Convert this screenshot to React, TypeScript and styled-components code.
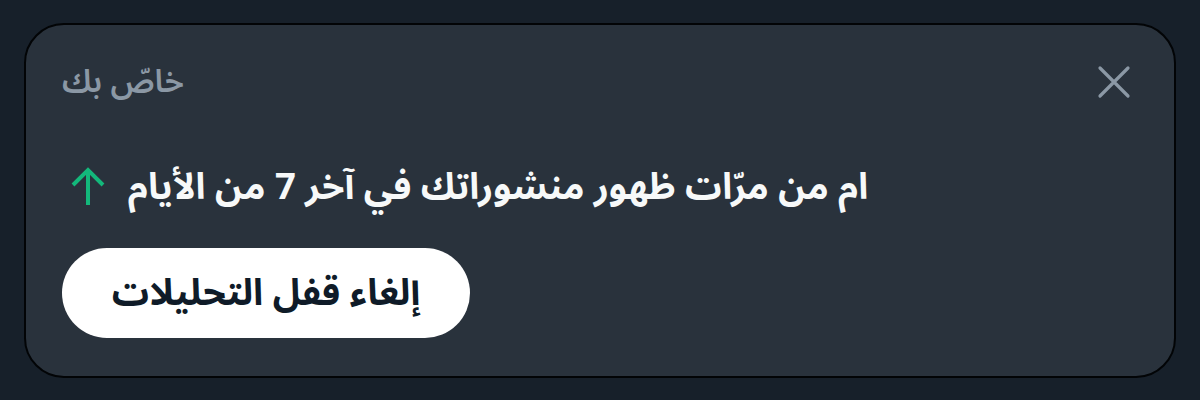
import styled, { createGlobalStyle } from "styled-components";

const GlobalStyle = createGlobalStyle`
  body {
    margin: 0;
    background-color: #17202a;
    font-family: "Noto Sans Arabic", "DejaVu Sans", "Noto Sans", sans-serif;
  }
`;

const Page = styled.div`
  width: 1200px;
  height: 400px;
  padding: 23px 24px 0 24px;
  box-sizing: border-box;
  overflow: hidden;
`;

const Card = styled.div`
  box-sizing: border-box;
  width: 1152px;
  height: 355px;
  background-color: #29323c;
  border: 2.5px solid #020406;
  border-radius: 40px;
  padding: 36px 36px 37px 36px;
  display: flex;
  flex-direction: column;
`;

const Header = styled.div`
  height: 42px;
  display: flex;
  align-items: center;
  justify-content: space-between;
`;

const Label = styled.span`
  color: #8b98a5;
  font-size: 32px;
  font-weight: 600;
  direction: rtl;
`;

const CloseButton = styled.button`
  background: none;
  border: none;
  padding: 0;
  margin-right: 6px;
  width: 36px;
  height: 36px;
  display: flex;
  align-items: center;
  justify-content: center;
  cursor: pointer;
`;

const Headline = styled.div`
  margin-top: 63px;
  height: 42px;
  display: flex;
  align-items: center;
  gap: 22px;
  padding-left: 8px;
`;

const HeadlineText = styled.span`
  color: #f7f9f9;
  font-size: 36.4px;
  font-weight: 700;
  direction: rtl;
`;

const Unlock = styled.button`
  margin-top: 40px;
  width: 408px;
  height: 90px;
  border: none;
  border-radius: 45px;
  background-color: #ffffff;
  color: #0f1b28;
  font-family: inherit;
  font-size: 37px;
  font-weight: 700;
  direction: rtl;
  display: flex;
  align-items: center;
  justify-content: center;
  cursor: pointer;
`;

export default function App() {
  return (
    <>
      <GlobalStyle />
      <Page>
        <Card>
          <Header>
            <Label>خاصّ بك</Label>
            <CloseButton aria-label="إغلاق">
              <svg width="34" height="34" viewBox="0 0 34 34">
                <path
                  d="M3 3 L31 31 M31 3 L3 31"
                  stroke="#8b98a5"
                  strokeWidth="3.2"
                  strokeLinecap="round"
                  fill="none"
                />
              </svg>
            </CloseButton>
          </Header>
          <Headline>
            <svg width="36" height="40" viewBox="0 0 36 40">
              <path
                d="M18 38 V3 M3 18 L18 3 L33 18"
                stroke="#13b87b"
                strokeWidth="4"
                fill="none"
              />
            </svg>
            <HeadlineText>ام من مرّات ظهور منشوراتك في آخر 7 من الأيام</HeadlineText>
          </Headline>
          <Unlock>إلغاء قفل التحليلات</Unlock>
        </Card>
      </Page>
    </>
  );
}
